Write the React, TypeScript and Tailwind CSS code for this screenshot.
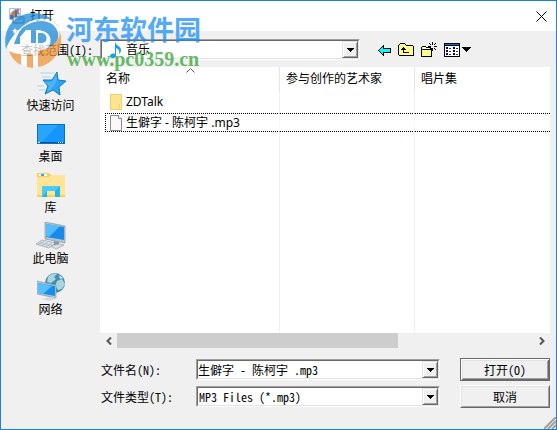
import type { ReactNode } from 'react';

const songFont = "font-['Noto_Sans_Mono_CJK_SC','Noto_Sans_CJK_SC',monospace]";
const sunken =
  'border border-t-[#a0a0a0] border-l-[#a0a0a0] border-r-white border-b-white';
const sunkenInner =
  'border border-t-[#696969] border-l-[#696969] border-r-[#e3e3e3] border-b-[#e3e3e3]';
const arrowFace =
  'border border-t-[#e3e3e3] border-l-[#e3e3e3] border-r-[#696969] border-b-[#696969] bg-[#f0f0f0] shadow-[inset_1px_1px_0_#fff,inset_-1px_-1px_0_#a0a0a0]';

function DownArrow() {
  return (
    <svg width="7" height="4" viewBox="0 0 7 4" shapeRendering="crispEdges" aria-hidden="true">
      <path d="M0 0h7v1h-1v1h-1v1h-1v1h-1v-1h-1v-1h-1v-1h-1z" fill="#000" />
    </svg>
  );
}

function DropSelect({ id, value, icon }: { id: string; value: string; icon?: ReactNode }) {
  return (
    <div className={`relative w-full ${sunken}`}>
      <div className={`flex h-[19px] bg-white ${sunkenInner}`}>
        <select
          id={id}
          className={`w-full appearance-none bg-white text-[12px] leading-4 outline-none ${icon ? "pl-6 font-['Noto_Sans','Noto_Sans_CJK_SC',sans-serif]" : `pl-px ${songFont}`}`}
        >
          <option>{value}</option>
        </select>
      </div>
      {icon && <span className="pointer-events-none absolute top-px left-2">{icon}</span>}
      <span
        className={`pointer-events-none absolute top-px right-px bottom-px flex w-4 items-center justify-center ${arrowFace}`}
      >
        <DownArrow />
      </span>
    </div>
  );
}

function StarIcon() {
  return (
    <svg width="32" height="26" viewBox="0 0 32 26" aria-hidden="true">
      <path d="M5 3h14M7 7h9M2 16h7M4 20h6" stroke="#a6d8f5" strokeWidth="1" />
      <path d="M22 2l1 8 8 1-7 6 1 8-7-5-8 4 3-8-5-6h9z" fill="#2ba4f3" stroke="#1479bd" />
      <path d="M21 4l1 7-6 9-4 2 2-6-4-4h7z" fill="#62c0fa" opacity=".6" />
    </svg>
  );
}

function DesktopIcon() {
  return (
    <svg width="28" height="20" viewBox="0 0 28 20" aria-hidden="true">
      <path d="M0 0h28v20H0z" fill="#0b70c0" />
      <path d="M1 1h26v17H1z" fill="#1695fa" />
      <path d="M1 1h20L5 18H1z" fill="#2aa5ff" />
      <path d="M1 18h26v1H1z" fill="#084f8c" />
      <path d="M1 18h2v1H1zM21 18h1v1h-1zM23 18h1v1h-1zM25 18h1v1h-1z" fill="#fff" />
    </svg>
  );
}

function LibraryIcon() {
  return (
    <svg width="28" height="25" viewBox="0 0 28 25" aria-hidden="true">
      <path d="M0 0h12l2 2h14v22H0z" fill="#f9cf55" />
      <path d="M0 4h12l2-2h14v20H0z" fill="#ffe595" />
      <path d="M2 1h8v2H2z" fill="#fff" />
      <path d="M4 1h3v2H4z" fill="#1eaaf1" />
      <path d="M5 13h18v11h-5v-6h-8v6H5z" fill="#20b5ed" />
      <path d="M5 13h18l-5 5h-8l-5 6z" fill="#4accf7" />
    </svg>
  );
}

function ComputerIcon() {
  return (
    <svg width="32" height="28" viewBox="0 0 32 28" aria-hidden="true">
      <path d="M10 0l20 4v17l-20-4z" fill="#b9c5ce" stroke="#7a8994" strokeWidth=".6" />
      <path d="M11 2l18 3v13l-18-3z" fill="#168ce8" />
      <path d="M11 2l14 2-11 11-3-1z" fill="#55bdff" />
      <path d="M19 19l5 1v4l-5-1z" fill="#8b9aa5" />
      <path d="M15 24l9-2 5 1-8 4z" fill="#d8e0e5" stroke="#8999a4" strokeWidth=".6" />
      <path d="M7 18l13 3-6 5-13-4z" fill="#e7edf0" stroke="#8b98a1" strokeWidth=".7" />
      <path d="M5 20l12 3M3 21l12 3M9 19l-6 4M13 20l-6 4M17 21l-6 4" stroke="#a0adb5" strokeWidth=".7" />
    </svg>
  );
}

function NetworkIcon() {
  return (
    <svg width="28" height="28" viewBox="0 0 28 28" aria-hidden="true">
      <circle cx="18" cy="10" r="10" fill="#458cae" />
      <path d="M11 4c3-4 8-4 9-3l-3 3 2 2-5 4-4-1zM20 8l5-2 3 5-3 5-4 1-3-4z" fill="#a9d5df" />
      <path d="M22 2l4 3-3 1zM13 14l4 1-1 4z" fill="#d4edf0" />
      <path d="M0 8l19 4v13L0 21z" fill="#b6c8d3" stroke="#6f8795" strokeWidth=".5" />
      <path d="M1 10l17 3v10L1 20z" fill="#168eea" />
      <path d="M1 10l14 3-9 8-5-1z" fill="#55bfff" />
      <path d="M8 23l4 1v3l8-2-5-1" fill="#a0afb8" />
      <path d="M4 26l10-2 6 1-7 3z" fill="#d1dbe1" />
    </svg>
  );
}

const places = [
  { name: '快速访问', icon: <StarIcon /> },
  { name: '桌面', icon: <DesktopIcon /> },
  { name: '库', icon: <LibraryIcon /> },
  { name: '此电脑', icon: <ComputerIcon /> },
  { name: '网络', icon: <NetworkIcon /> },
];

function TitleBar() {
  return (
    <header className="flex h-[30px] items-center bg-white pr-[9px] pl-2">
      <svg width="17" height="18" viewBox="0 0 17 18" aria-hidden="true">
        <path d="M0 1h12v12H0z" fill="#a9c4e4" />
        <path d="M1 2h4v4H1zM8 3h3v3H8z" fill="#f8fbff" />
        <path d="M2 6l3-3 2 4-3 5zM8 2h2v5H8z" fill="#d87343" />
        <path d="M1 8h3v4H1zM6 3h2v8H6z" fill="#3879b8" />
        <path d="M4 10h11v6H4z" fill="#eee" stroke="#53677a" />
        <path d="M6 12h7" stroke="#7b8ea0" />
      </svg>
      <h1 className="ml-1 flex-1 text-[12px] leading-4">打开</h1>
      <button aria-label="关闭" className="flex size-[11px] items-center justify-center">
        <svg width="11" height="11" viewBox="0 0 11 11" aria-hidden="true">
          <path d="M.5.5l10 10M10.500.5l-10 10" stroke="#000" />
        </svg>
      </button>
    </header>
  );
}

function Toolbar() {
  return (
    <div className="flex h-9 items-center pt-px pl-5">
      <label htmlFor="look-in" className={`w-[79px] shrink-0 text-[12px] leading-4 whitespace-nowrap ${songFont}`}>
        查找范围(I):
      </label>
      <div className="min-w-0 flex-1">
        <DropSelect
          id="look-in"
          value="音乐"
          icon={
            <svg width="16" height="18" viewBox="0 0 16 18" aria-hidden="true">
              <path d="M6 1c1 4 6 4 6 8 0 2-1 3-2 4 1-4-1-5-3-6v7c0 4-6 4-6 1 0-2 3-3 5-2z" fill="#159ff0" />
            </svg>
          }
        />
      </div>
      <div className="mr-[85px] ml-[18px] flex items-center gap-[7px]">
        <button aria-label="后退">
          <svg width="13" height="16" viewBox="0 0 13 16" shapeRendering="crispEdges" aria-hidden="true">
            <path d="M5 3h1v3h7v5H6v3H5v-1H4v-1H3v-1H2v-1H1V9H0V8h1V7h1V6h1V5h1V4h1z" fill="#000" />
            <path d="M5 5v2h7v3H5v2H4v-1H3v-1H2V9H1V8h1V7h1V6h1V5z" fill="#0ff" />
          </svg>
        </button>
        <button aria-label="向上一级">
          <svg width="16" height="16" viewBox="0 0 16 16" shapeRendering="crispEdges" aria-hidden="true">
            <path d="M2 1h5v1h1v1h7v1h1v10H1v-1H0V3h1V2h1z" fill="#000" />
            <path d="M2 2h5v1h1v1h7v9H1V3h1z" fill="#ffff90" />
            <path d="M5 5h1v1h1v1h1v1H6v2h5v1H5V8H3V7h1V6h1z" fill="#000" />
          </svg>
        </button>
        <button aria-label="新建文件夹">
          <svg width="16" height="16" viewBox="0 0 16 16" shapeRendering="crispEdges" aria-hidden="true">
            <path d="M1 4h4v1h5v1h1v9H0V5h1z" fill="#000" />
            <path d="M1 5h4v1h5v8H1z" fill="#ffff90" />
            <path d="M1 7h9v1H1z" fill="#000" />
            <path d="M11 0h1v3h-1zM11 6h1v3h-1zM7 4h3v1H7zM13 4h3v1h-3zM8 1h1v1H8zM9 2h1v1H9zM13 2h1v1h-1zM14 1h1v1h-1zM13 6h1v1h-1zM14 7h1v1h-1zM9 6h1v1H9z" fill="#000" />
          </svg>
        </button>
        <button aria-label="查看菜单" className="flex items-center gap-[2px]">
          <svg width="16" height="16" viewBox="0 0 16 16" shapeRendering="crispEdges" aria-hidden="true">
            <path d="M0 1h16v14H0z" fill="#000" />
            <path d="M1 4h14v10H1z" fill="#fff" />
            <path d="M1 2h14v1H1z" fill="#0078d7" />
            <path d="M2 5h2v2H2zM2 8h2v2H2zM2 11h2v2H2zM9 5h2v2H9zM9 8h2v2H9zM9 11h2v2H9z" fill="#000080" />
            <path d="M5 6h2v1H5zM5 9h2v1H5zM5 12h2v1H5zM12 6h2v1h-2zM12 9h2v1h-2zM12 12h2v1h-2z" fill="#333" />
          </svg>
          <svg width="9" height="5" viewBox="0 0 9 5" shapeRendering="crispEdges" aria-hidden="true">
            <path d="M0 0h9v1H8v1H7v1H6v1H5v1H4V4H3V3H2V2H1V1H0z" fill="#000" />
          </svg>
        </button>
      </div>
    </div>
  );
}

function FileList() {
  return (
    <div className="relative flex flex-1 bg-white pl-[5px]">
      <svg className="absolute top-px left-[86px]" width="9" height="5" viewBox="0 0 9 5" aria-hidden="true">
        <path d="M.5 4.500l4-4 4 4" fill="none" stroke="#555" />
      </svg>
      <table className="w-full table-fixed border-separate border-spacing-0 text-left text-[12px] leading-4">
        <thead>
          <tr className="h-6">
            <th className="w-[175px] border-r border-[#e5e5e5] p-0 pl-px font-normal">名称</th>
            <th className="w-[135px] border-r border-[#e5e5e5] p-0 pl-[6px] font-normal">参与创作的艺术家</th>
            <th className="p-0 pl-[6px] font-normal">唱片集</th>
          </tr>
        </thead>
        <tbody>
          <tr className="h-[22px]">
            <td className="border-r border-[#e8f1fc] p-0 pl-[5px]">
              <div className="flex items-center gap-1">
                <svg width="12" height="16" viewBox="0 0 12 16" aria-hidden="true">
                  <path d="M0 0h12v16H0z" fill="#f4d069" />
                  <path d="M1 1h10v9H9v5H1z" fill="#ffe48f" />
                  <path d="M10 10h1v5h-1z" fill="#fff0b8" />
                </svg>
                ZDTalk
              </div>
            </td>
            <td className="border-r border-[#e8f1fc] p-0" />
            <td className="p-0" />
          </tr>
          <tr className="h-[19px]">
            <td className="border-y border-r border-l border-dotted border-t-black border-r-[#e8f1fc] border-b-black border-l-black p-0 pl-1">
              <div className="flex items-center gap-1 whitespace-nowrap">
                <svg width="12" height="16" viewBox="0 0 12 16" aria-hidden="true">
                  <path d="M.5.5h8l3 3v12H.5z" fill="#f9f9f9" stroke="#8c8c8c" />
                  <path d="M8.500.5v3h3" fill="#fff" stroke="#8c8c8c" />
                </svg>
                生僻字 - 陈柯宇 .mp3
              </div>
            </td>
            <td className="border-y border-r border-dotted border-t-black border-r-[#e8f1fc] border-b-black p-0" />
            <td className="border-y border-dotted border-black p-0" />
          </tr>
          <tr>
            <td className="border-r border-[#e8f1fc] p-0" />
            <td className="border-r border-[#e8f1fc] p-0" />
            <td className="p-0" />
          </tr>
        </tbody>
      </table>
    </div>
  );
}

function ScrollBar() {
  return (
    <div className="flex h-[15px] items-stretch">
      <button aria-label="向左滚动" className="flex w-[17px] items-center justify-center">
        <svg width="6" height="8" viewBox="0 0 6 8" aria-hidden="true">
          <path d="M5 .5L1.500 4 5 7.500" fill="none" stroke="#555" strokeWidth="2" />
        </svg>
      </button>
      <div className="flex-1">
        <div className="h-full w-[67.5%] bg-[#cdcdcd]" />
      </div>
      <button aria-label="向右滚动" className="flex w-[17px] items-center justify-center">
        <svg width="6" height="8" viewBox="0 0 6 8" aria-hidden="true">
          <path d="M1 .5L4.500 4 1 7.500" fill="none" stroke="#555" strokeWidth="2" />
        </svg>
      </button>
    </div>
  );
}

function FileForm() {
  return (
    <form
      className={`grid grid-cols-[95px_1fr_90px] items-center gap-y-1 pt-[10px] pb-[21px] pl-px text-[12px] leading-4 ${songFont}`}
      onSubmit={(e) => e.preventDefault()}
    >
      <label htmlFor="file-name">文件名(N):</label>
      <div className={`mr-5 ${sunken}`}>
        <div className={`flex h-[19px] bg-white ${sunkenInner}`}>
          <input
            id="file-name"
            defaultValue="生僻字 - 陈柯宇 .mp3"
            className="min-w-0 flex-1 bg-white outline-none"
          />
          <button type="button" aria-label="文件名列表" className={`flex w-4 items-center justify-center ${arrowFace}`}>
            <DownArrow />
          </button>
        </div>
      </div>
      <button
        type="submit"
        className="h-[23px] border border-[#696969] bg-[#f0f0f0] shadow-[inset_1px_1px_0_#fff,inset_-1px_-1px_0_#696969,inset_2px_2px_0_#e3e3e3,inset_-2px_-2px_0_#a0a0a0]"
      >
        打开(O)
      </button>
      <label htmlFor="file-type">文件类型(T):</label>
      <div className="mr-5">
        <DropSelect id="file-type" value="MP3 Files (*.mp3)" />
      </div>
      <button
        type="button"
        className="h-[23px] border border-t-white border-r-[#696969] border-b-[#696969] border-l-white bg-[#f0f0f0] shadow-[inset_1px_1px_0_#e3e3e3,inset_-1px_-1px_0_#a0a0a0]"
      >
        取消
      </button>
    </form>
  );
}

function Watermark() {
  return (
    <div className="pointer-events-none absolute top-[10px] left-1 flex items-start gap-1 opacity-75">
      <svg width="57" height="58" viewBox="0 0 57 58" aria-hidden="true">
        <circle cx="28" cy="30" r="26" fill="#fff" />
        <path d="M1 38C-3 18 9 3 28 2c8 0 15 3 20 7-11-3-22-1-30 6C9 22 4 30 1 38z" fill="#1b8ad6" />
        <path d="M17 17C27 9 39 8 47 13c5 4 7 9 6 14-1 5-5 9-11 12 4-5 5-12 1-16-3-3-7-4-12-4v13h-5V19h-5l-6 7v7H9c2-6 4-11 8-16z" fill="#1b8ad6" />
        <path d="M33 22h4c6 1 6 10 0 10h-4z" fill="#1b8ad6" />
        <path d="M46 8c12 9 14 28 3 39-4 5-10 8-16 9V40c10-2 18-7 21-14 2-7-1-13-8-18z" fill="#f1973c" />
        <path d="M4 40c4 2 8 3 12 3v11C10 51 6 46 4 40zM22 43h6v14l-6-1z" fill="#f1973c" />
        <path d="M10 17l1 2h2l-2 2 1 2-2-1-2 1 1-2-2-2h2z" fill="#fff" />
      </svg>
      <div className="whitespace-nowrap">
        <div className="font-['Noto_Sans_CJK_SC',sans-serif] text-[27px] leading-9 font-bold text-[#1b8ff5]">
          河东软件园
        </div>
        <div className="pt-[2px] pl-px font-['Liberation_Serif',serif] text-[20px] leading-5 font-bold text-[#36a536]">
          www.pc0359.cn
        </div>
      </div>
    </div>
  );
}

export default function App() {
  return (
    <div className="relative flex min-h-screen flex-col border border-[#1883d7] bg-[#f0f0f0] font-['Noto_Sans','Noto_Sans_CJK_SC',sans-serif] text-black">
      <TitleBar />
      <Toolbar />
      <main className="flex flex-1">
        <nav className="flex w-[99px] shrink-0 flex-col gap-[7px] pt-[2px]">
          {places.map((place) => (
            <button key={place.name} className="flex flex-col items-center">
              <span className="flex h-7 items-center">{place.icon}</span>
              <span className={`text-[12px] leading-4 ${songFont}`}>{place.name}</span>
            </button>
          ))}
        </nav>
        <div className="mr-[6px] flex min-w-0 flex-1 flex-col">
          <FileList />
          <ScrollBar />
          <FileForm />
        </div>
      </main>
      <svg className="absolute right-0 bottom-0" width="12" height="12" viewBox="0 0 12 12" aria-hidden="true">
        <path d="M0 12L12 0M4 12l8-8M8 12l4-4" stroke="#a0a0a0" strokeWidth="2" />
      </svg>
      <Watermark />
    </div>
  );
}
